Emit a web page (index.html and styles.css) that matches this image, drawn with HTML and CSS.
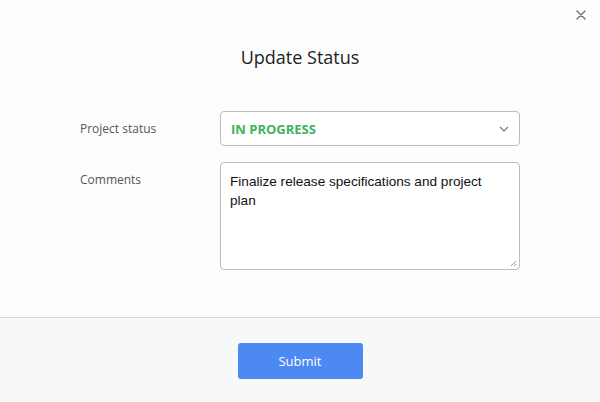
FILE: index.html
```html
<!DOCTYPE html>
<html>
<head>
<meta charset="utf-8">
<link rel="stylesheet" href="styles.css">
</head>
<body>
<div class="modal">
  <div class="body">
    <button class="close" aria-label="Close">
      <svg width="10" height="10" viewBox="0 0 10 10"><path d="M1 1L9 9M9 1L1 9" stroke="#777" stroke-width="1.5" stroke-linecap="round"/></svg>
    </button>
    <h1 class="title">Update Status</h1>
    <div class="form">
      <div class="row">
        <div class="label">Project status</div>
        <div class="select">
          <span class="status">IN PROGRESS</span>
          <svg class="chev" width="10" height="6" viewBox="0 0 10 6"><path d="M1 1L5 5L9 1" fill="none" stroke="#777" stroke-width="1.2"/></svg>
        </div>
      </div>
      <div class="row">
        <div class="label label-c">Comments</div>
        <div class="textarea">Finalize release specifications and project plan
          <svg class="grip" width="8" height="8" viewBox="0 0 8 8"><path d="M7 2L2 7M7 5L5 7" stroke="#888" stroke-width="0.9"/></svg>
        </div>
      </div>
    </div>
  </div>
  <div class="footer">
    <button class="submit">Submit</button>
  </div>
</div>
</body>
</html>
```
FILE: styles.css
```css
* { box-sizing: border-box; }
html, body { margin: 0; padding: 0; }
body { width: 600px; height: 402px; font-family: "Open Sans", sans-serif; background: #fdfdfd; }
.modal { display: flex; flex-direction: column; height: 402px; }
.body { position: relative; height: 318px; border-bottom: 1px solid #d9dadc; background: #fdfdfd; padding-top: 43px; }
.close { position: absolute; top: 8px; right: 12px; width: 14px; height: 14px; padding: 0; border: none; background: none; display: flex; align-items: center; justify-content: center; }
.title { margin: 0; text-align: center; font-weight: 400; font-size: 18px; line-height: 28px; color: #222; }
.form { margin-top: 40px; display: flex; flex-direction: column; gap: 16px; padding-left: 80px; }
.row { display: flex; align-items: flex-start; }
.label { width: 140px; font-size: 12px; color: #555; line-height: 35px; }
.label-c { line-height: 36px; }
.select { width: 300px; height: 35px; border: 1px solid #bdbdbd; border-radius: 4px; background: #fff; display: flex; align-items: center; justify-content: space-between; padding: 0 10px 0 10px; }
.status { font-weight: 700; font-size: 13px; color: #3db35b; }
.textarea { position: relative; width: 300px; height: 108px; border: 1px solid #bdbdbd; border-radius: 4px; background: #fff; padding: 9px 9px; font-family: "Liberation Sans", Arial, sans-serif; font-size: 13.6px; line-height: 19px; color: #111; }
.grip { position: absolute; right: 2px; bottom: 2px; }
.footer { flex: 1; background: #f7f8fa; display: flex; justify-content: center; padding-top: 25px; }
.submit { width: 125px; height: 36px; border: none; border-radius: 3px; background: #4d89f2; color: #fff; font-family: "Open Sans", sans-serif; font-size: 13px; }
```
